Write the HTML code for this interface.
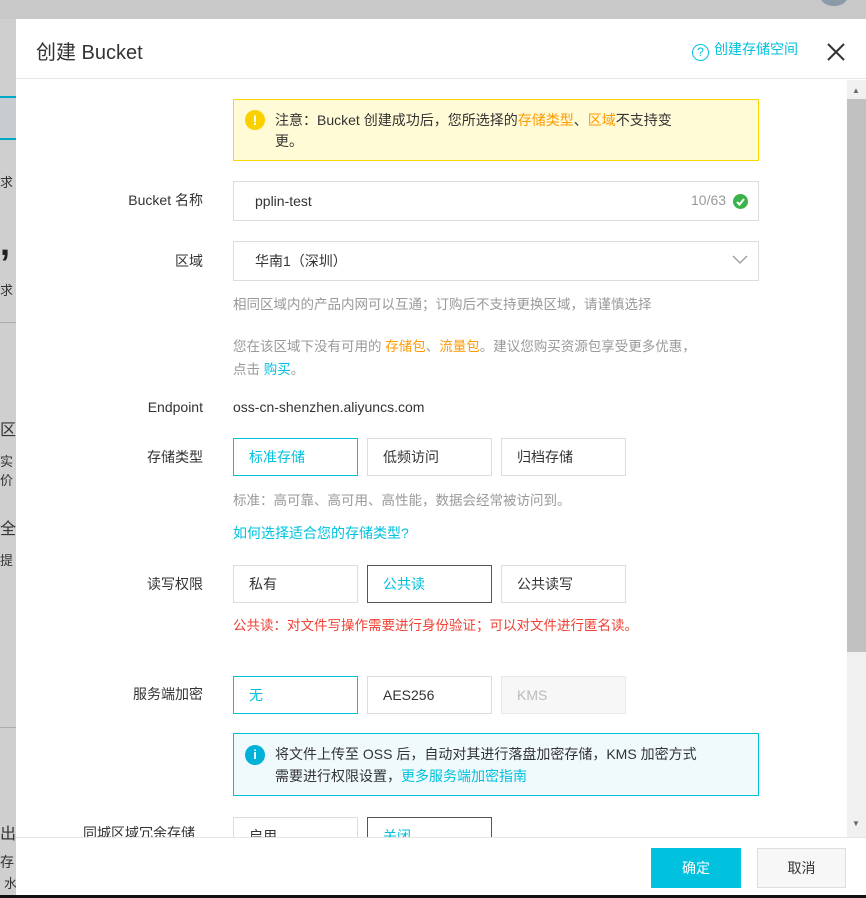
<!DOCTYPE html>
<html><head><meta charset="utf-8"><style>
*{box-sizing:border-box;margin:0;padding:0}
body{width:866px;height:898px;overflow:hidden;background:#cfcfcf;font-family:"Liberation Sans","Noto Sans CJK SC",sans-serif;font-size:14px;color:#333;position:relative}
.abs{position:absolute}
.dlg{position:absolute;left:16px;top:19px;width:850px;height:876px;background:#fff}
.lbl{position:absolute;right:663px;text-align:right;width:150px;color:#333}
.box{position:absolute;border:1px solid #ddd;height:38px;line-height:36px;padding-left:15px}
.sel{border-color:#00c1de;color:#00c1de}
.hint{position:absolute;left:233px;color:#999;font-size:13.5px;white-space:nowrap}
</style></head><body>
<div class="abs" style="left:0;top:0;width:866px;height:19px;background:#c8c8c8"></div>
<div class="abs" style="left:820px;top:-14px;width:28px;height:20px;background:#8a9aa8;border-radius:50%"></div>
<div class="abs" style="left:0;top:96px;width:16px;height:2px;background:#00a9c8"></div>
<div class="abs" style="left:0;top:98px;width:16px;height:40px;background:#c6ccd0"></div>
<div class="abs" style="left:0;top:138px;width:16px;height:2px;background:#00a9c8"></div>
<div class="abs" style="left:0;top:172px;font-size:13px;color:#333">求</div>
<div class="abs" style="left:0;top:222px;font-size:36px;color:#222;font-weight:bold">,</div>
<div class="abs" style="left:0;top:280px;font-size:13px">求</div>
<div class="abs" style="left:0;top:322px;width:16px;height:1px;background:#aaa"></div>
<div class="abs" style="left:0;top:416px;font-size:16px">区</div>
<div class="abs" style="left:0;top:451px;font-size:13px">实</div>
<div class="abs" style="left:0;top:470px;font-size:13px">价</div>
<div class="abs" style="left:0;top:515px;font-size:16px">全</div>
<div class="abs" style="left:0;top:550px;font-size:13px">提</div>
<div class="abs" style="left:0;top:727px;width:16px;height:1px;background:#aaa"></div>
<div class="abs" style="left:0;top:820px;font-size:16px">出</div>
<div class="abs" style="left:0;top:852px;font-size:14px">存</div>
<div class="abs" style="left:4px;top:873px;font-size:13px">水</div>
<div class="abs" style="left:0;top:895px;width:866px;height:3px;background:#111"></div>

<div class="dlg">
 <div class="abs" style="left:20px;top:17px;font-size:20px;color:#333">创建 Bucket</div>
 <div class="abs" style="left:676px;top:20px;color:#00c1de;font-size:14px"><span style="display:inline-block;width:17px;height:17px;border:1.3px solid #00c1de;border-radius:50%;text-align:center;line-height:15px;font-size:12px;vertical-align:-2px;margin-right:5px">?</span>创建存储空间</div>
 <svg class="abs" style="left:810px;top:23px" width="20" height="20"><path d="M2 2L18 18M18 2L2 18" stroke="#333" stroke-width="2"/></svg>
 <div class="abs" style="left:0;top:59px;width:850px;height:1px;background:#e5e5e5"></div>
 <div class="abs" style="left:831px;top:61px;width:19px;height:757px;background:#f0f0f0"></div>
 <div class="abs" style="left:831px;top:80px;width:19px;height:553px;background:#c1c1c1"></div>
 <div class="abs" style="left:836px;top:67px;font-size:8px;color:#666">▲</div>
 <div class="abs" style="left:836px;top:800px;font-size:8px;color:#666">▼</div>
</div>

<div class="abs" style="left:233px;top:99px;width:526px;height:62px;background:#fffbd6;border:1px solid #fbd800"></div>
<div class="abs" style="left:245px;top:110px;width:20px;height:20px;border-radius:50%;background:#fbd000;color:#fff;font-weight:bold;text-align:center;line-height:20px;font-size:14px">!</div>
<div class="abs" style="left:275px;top:110px;line-height:21px;color:#333;white-space:nowrap">注意：Bucket 创建成功后，您所选择的<span style="color:#f90">存储类型</span>、<span style="color:#f90">区域</span>不支持变<br>更。</div>

<div class="lbl" style="top:190px">Bucket 名称</div>
<div class="box" style="left:233px;top:181px;width:526px;height:40px;line-height:38px;padding-left:21px">pplin-test</div>
<div class="abs" style="left:691px;top:192px;color:#999">10/63</div>
<div class="abs" style="left:733px;top:194px;width:15px;height:15px;border-radius:50%;background:#3cb34a"></div>
<svg class="abs" style="left:733px;top:194px" width="15" height="15"><path d="M4 8L6.5 10.5L11 5" stroke="#fff" stroke-width="2" fill="none"/></svg>

<div class="lbl" style="top:251px">区域</div>
<div class="box" style="left:233px;top:241px;width:526px;height:40px;line-height:38px;padding-left:21px">华南1（深圳）</div>
<svg class="abs" style="left:732px;top:255px" width="16" height="10"><path d="M1 1L8 8L15 1" stroke="#999" stroke-width="1.3" fill="none"/></svg>
<div class="hint" style="top:293px">相同区域内的产品内网可以互通；订购后不支持更换区域，请谨慎选择</div>
<div class="hint" style="top:335px;line-height:23px">您在该区域下没有可用的 <span style="color:#f90">存储包</span>、<span style="color:#f90">流量包</span>。建议您购买资源包享受更多优惠，<br>点击 <span style="color:#00c1de">购买</span>。</div>

<div class="lbl" style="top:399px">Endpoint</div>
<div class="abs" style="left:233px;top:399px">oss-cn-shenzhen.aliyuncs.com</div>

<div class="lbl" style="top:447px">存储类型</div>
<div class="box sel" style="left:233px;top:438px;width:125px">标准存储</div>
<div class="box" style="left:367px;top:438px;width:125px">低频访问</div>
<div class="box" style="left:501px;top:438px;width:125px">归档存储</div>
<div class="hint" style="top:489px">标准：高可靠、高可用、高性能，数据会经常被访问到。</div>
<div class="abs" style="left:233px;top:523px;color:#00c1de">如何选择适合您的存储类型?</div>

<div class="lbl" style="top:574px">读写权限</div>
<div class="box" style="left:233px;top:565px;width:125px">私有</div>
<div class="box sel" style="left:367px;top:565px;width:125px;border-color:#555">公共读</div>
<div class="box" style="left:501px;top:565px;width:125px">公共读写</div>
<div class="abs" style="left:233px;top:614px;color:#f04134;font-size:13.5px">公共读：对文件写操作需要进行身份验证；可以对文件进行匿名读。</div>

<div class="lbl" style="top:684px">服务端加密</div>
<div class="box sel" style="left:233px;top:676px;width:125px">无</div>
<div class="box" style="left:367px;top:676px;width:125px">AES256</div>
<div class="box" style="left:501px;top:676px;width:125px;background:#f7f7f7;color:#bbb;border-color:#e8e8e8">KMS</div>

<div class="abs" style="left:233px;top:733px;width:526px;height:63px;background:#f0fafd;border:1px solid #00c1de"></div>
<div class="abs" style="left:245px;top:745px;width:20px;height:20px;border-radius:50%;background:#00b1d8;color:#fff;font-weight:bold;text-align:center;line-height:20px;font-size:13px">i</div>
<div class="abs" style="left:275px;top:743px;line-height:22px;color:#333;white-space:nowrap">将文件上传至 OSS 后，自动对其进行落盘加密存储，KMS 加密方式<br>需要进行权限设置，<span style="color:#00c1de">更多服务端加密指南</span></div>

<div style="position:absolute;left:16px;top:816px;width:815px;height:21px;overflow:hidden">
 <div class="abs" style="left:67px;top:7px">同城区域冗余存储</div>
 <div class="box" style="left:217px;top:1px;width:125px">启用</div>
 <div class="box sel" style="left:351px;top:1px;width:125px;border-color:#555">关闭</div>
</div>
<div class="abs" style="left:16px;top:837px;width:850px;height:1px;background:#e5e5e5"></div>
<div class="abs" style="left:651px;top:848px;width:90px;height:40px;background:#00c1de;color:#fff;text-align:center;line-height:40px">确定</div>
<div class="abs" style="left:757px;top:848px;width:89px;height:40px;background:#f7f7f7;border:1px solid #ddd;text-align:center;line-height:38px">取消</div>
</body></html>
